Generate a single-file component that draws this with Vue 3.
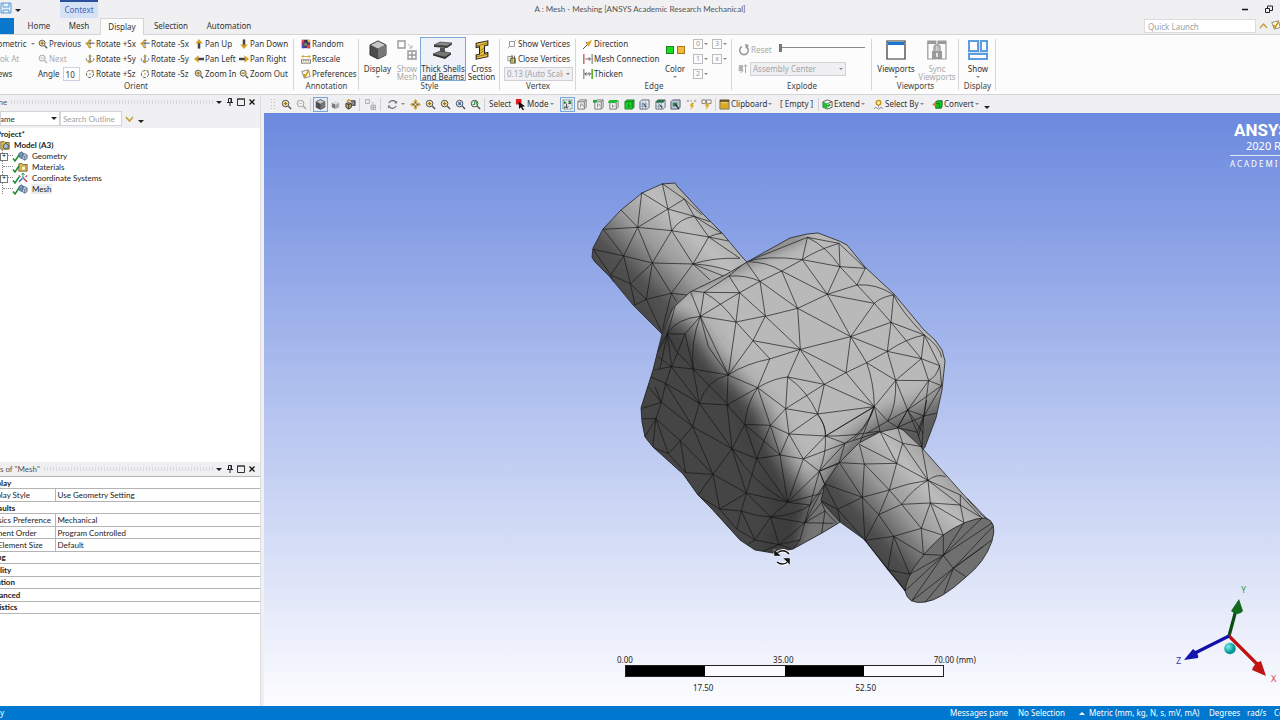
<script setup>
const orient = [
  [['zin', 'Previous'], ['rx', 'Rotate +Sx'], ['rx', 'Rotate -Sx'], ['up', 'Pan Up'], ['down', 'Pan Down']],
  [['zoff', 'Next', true], ['ry', 'Rotate +Sy'], ['ry', 'Rotate -Sy'], ['left', 'Pan Left'], ['right', 'Pan Right']],
  [null, ['rz', 'Rotate +Sz'], ['rz', 'Rotate -Sz'], ['zin', 'Zoom In'], ['zout', 'Zoom Out']],
]
const views = ['Isometric', 'Look At', 'Views']
const annotation = [['random', 'Random'], ['rescale', 'Rescale'], ['prefs', 'Preferences']]
const edge = [['direction', 'Direction'], ['meshcon', 'Mesh Connection'], ['thicken', 'Thicken']]
const edgeKinds = ['0', '3', '1', 'x', '2']
const zoomTools = ['pan', 'zin', 'zin', 'zblue', 'zgreen']
const filters = ['fcube', 'fvert', 'fedge', 'fbody', 'fnode', 'fnodeface', 'felem', 'fhit', 'fcoord']
const tree = [
  { icon: 'model', name: 'Model (A3)', root: true },
  { icon: 'geom', name: 'Geometry', plus: true },
  { icon: 'mat', name: 'Materials' },
  { icon: 'csys', name: 'Coordinate Systems', plus: true },
  { icon: 'geom', name: 'Mesh', on: true },
]
const details = [
  ['Display'], ['Display Style', 'Use Geometry Setting'], ['Defaults'],
  ['Physics Preference', 'Mechanical'], ['Element Order', 'Program Controlled'],
  ['Element Size', 'Default', true], ['Sizing'], ['Quality'], ['Inflation'], ['Advanced'], ['Statistics'],
]

// Mesh edges, one string per surface patch.
const shaftBack = `M247 41 264 117 275 182M247 41 313 87M185 68 264 117M185 68 173 172M264 117 313 87 343 139M264 117 343 139 390 155
M173 172 264 117M123 120 173 172M70 178 173 172 275 182M275 182Q300 145 343 139M275 182 386 201M313 87 366 135M343 139 386 201 480 265M386 201 445 213
M343 139 425 190M386 201Q410 190 425 190M173 172 131 258M173 172 217 279M275 182 217 279M275 182 339 282M386 201 339 282
M70 178 131 258M40 238 131 258 217 279 339 282M339 282Q400 262 480 265M339 282Q400 285 450 303M339 282 430 318M131 258 92 315M131 258 151 341
M40 238 92 315 151 341 217 279M151 341 199 388M217 279 199 388M217 279 274 370M339 282 274 370M274 370 199 388M151 341 165 405
M199 388 165 405M199 388 247 490M274 370 247 480M274 370 290 395M339 282 390 330M92 315 100 335M274 370 320 375`
const bodyTopLeft = `M332 366 361 439M372 367 361 439M332 362 372 367 479 368M479 368 361 439M372 367Q430 400 468 456M447 318 479 368
M447 318Q500 315 540 334M498 275 540 334M498 275 447 318M372 367 447 318M479 368 540 334M479 368 468 456M479 368 556 438M540 334 556 438M361 439 468 456 556 438M468 456 519 512
M468 456 445 615M361 439 445 615M361 439Q330 520 340 597M361 439 315 492M361 439Q290 445 262 492M262 492 315 492 340 597M315 492 275 591M262 492 275 591
M262 492 240 595M262 492 225 560M556 438 519 512M519 512 445 615M262 492 285 410M275 591 235 560M361 439 385 530 445 615M262 492 290 545 340 597`
const bodyTop = `M20 125 202 52 187 119M202 52 297 70M202 52Q260 80 300 140M297 70Q230 90 187 119M297 70 300 140M297 70 376 145M187 119 125 153
M187 119 300 140M187 119 262 223M20 125Q80 105 187 119M20 125Q80 125 125 153L60 184M125 153 262 223M125 153 173 265M60 184 173 265
M76 289 173 265M76 289 181 388M262 223 173 265M262 223 300 140M262 223 351 195M262 223 403 250M262 223 332 350
M300 140 376 145M300 140 351 195 376 145M351 195Q410 190 461 225M351 195 403 250M461 225Q425 230 403 250L332 350M403 250 453 307M461 225 453 307M461 225Q480 270 553 345
M173 265 332 350M173 265 181 388M332 350 181 388M332 350 453 307M332 350 442 394M332 350 318 458M332 350 380 428M453 307 442 394M453 307 553 345M453 307 544 416
M442 394Q500 355 553 345M442 394 544 416M318 458 380 428 442 394 467 481M553 345 544 416M553 345 599 437M544 416 599 437M544 416 566 482M544 416 467 481M553 345Q600 380 605 412M380 428Q402 490 403 560
M380 428 467 481M181 388 318 458 253 493M318 458 403 560M39 362 181 388M39 362 90 417
M253 493 403 560M232 582 403 560 257 648M403 560 467 481 566 482M403 560 443 603M403 560 420 633
M403 560Q390 610 340 660M467 481Q470 560 443 603M467 481 503 570M566 482 605 497M566 482 552 588M566 482 503 570M605 497 503 570M605 497 552 588M599 437Q590 470 566 482M599 437 605 497
M503 570 443 603 473 622M503 570 552 588 590 580M503 570 473 622M443 603 380 640M552 588 473 622M503 570 550 640M552 588 535 650M257 648Q320 650 420 633`
const bodyFront = `M189 87 124 80M189 87 294 105M189 87 208 190M189 87 300 200M124 80 107 130M124 80 72 90M124 80 208 190M294 105Q230 120 208 190L291 195 294 105M294 105 383 143M294 105Q350 70 419 57
M419 57 383 143Q430 115 473 111M510 28 473 111 583 133M419 57 510 28 583 133M473 111 467 206M473 111Q530 150 563 222L583 133 467 206
M383 143 467 206 563 222M467 206 477 282M467 206 421 256M563 222 477 282M563 222Q590 260 586 288M477 282 586 288M477 282 421 256M477 282 450 345M477 282 520 357
M383 143 291 195M383 143Q350 190 344 253M383 143 421 256M291 195 344 253M291 195 306 326M208 190 107 130M208 190 188 260M208 190 306 326M107 130 94 187 75 140M107 130 60 110M94 187 55 140M107 130 188 260
M344 253 306 326M344 253 421 256M344 253 380 356M344 253 450 345M421 256 380 356M421 256 450 345M380 356 450 345 520 357M450 345 473 487M380 356 306 326M380 356 349 459M380 356 473 487
M520 357 586 288M520 357 568 394M520 357 473 487M306 326 249 403M306 326 349 459M306 326Q370 430 473 487M306 326 188 260M188 260 94 187M188 260 151 302M188 260 249 403M151 302 78 236
M151 302 115 341M151 302 249 403M151 302 167 398M94 187 78 236 115 341M78 236 36 236M94 187 36 205M78 236 45 290M78 236 68 322 115 341 167 398M249 403 167 398M249 403 203 467M249 403 269 507M249 403 349 459
M349 459 334 513M349 459 422 531M349 459 473 487M334 513 269 507M334 513 375 600M334 513 320 567M334 513Q380 530 422 531L473 487M422 531 375 600M422 531Q500 525 540 495M422 531 524 548M422 531 447 614
M473 487 568 394M473 487 540 495M269 507 349 459M269 507 203 467M269 507 320 567 375 600 447 614M447 614 510 600M447 614 524 548M540 495 524 548M540 495 584 433M568 394 584 433M568 394 540 495
M586 288Q590 340 568 394M524 548 510 600 487 628M524 548 584 433M524 548 575 487M473 487 575 460M524 548 585 513 575 487M524 548 610 550M585 513 575 580M585 513 620 550M447 614 487 628M375 600 350 615M447 614 400 633M584 433 627 370M568 394 627 370 645 310M520 357 645 310`
const bodyRight = `M323 30 352 97 366 140M371 48 352 97M371 48 380 0M352 97 293 83M371 48 366 145M323 30 293 83M222 20Q200 90 135 130M222 20 178 133M77 108 135 130M52 43Q75 70 77 108M77 108 222 20M58 213 135 130M135 130 240 95M58 213 118 188M74 252 65 303M58 213 74 252`
const shaftFront = `M240 95 290 190M178 133 193 192M178 133 290 190M308 130 290 190M308 130 384 241M240 95 308 130 366 140M293 83 308 130M366 145 384 241M118 188 193 192 290 190M118 188 187 292
M74 252 187 292M74 252 113 328 187 292M193 192 187 292M193 192 268 270M290 190 268 270M290 190 384 241M384 241Q320 250 268 270M384 241Q340 265 305 313M384 241 391 309M384 241Q410 220 437 230M384 241 481 285M384 241 481 315
M187 292 268 270M187 292 236 344M187 292 195 421M268 270 305 313M268 270 236 344M305 313 391 309M305 313 236 344M305 313 364 385M391 309 364 385M391 309 430 406M391 309 492 368M391 309 481 315
M481 285 481 315 492 368M481 285 545 353M481 315 545 353M236 344 195 421M236 344 281 409M113 328 65 303M113 328 195 421M281 409 195 421M281 409 364 385M281 409 370 463M281 409 329 523
M281 409 263 509M364 385 430 406M364 385 370 463M195 421 263 509 329 523M263 509 316 572M195 421 316 572M113 328 120 365M502 295 560 355
M430 406 430 466 370 463M430 466 492 368M430 466 545 355M430 466 575 370M430 466 335 603M430 466 316 572M430 466 329 523M430 466 460 505M460 505 580 378M460 505 550 440M460 505 497 530M460 505 432 580
M460 505 335 603M460 505 375 607M460 505 575 420`
</script>

<template>
  <div class="app">
    <svg class="defs" aria-hidden="true">
      <symbol id="zin" viewBox="0 0 12 12"><circle cx="5" cy="5" r="3.6" fill="#f5efd6" stroke="#444"/><path d="M8 8l3 3" stroke="#555" stroke-width="1.6"/><path d="M3 5h4M5 3v4" stroke="#a87800" stroke-width="1.5"/></symbol>
      <symbol id="zout" viewBox="0 0 12 12"><circle cx="5" cy="5" r="3.6" fill="#f5efd6" stroke="#444"/><path d="M8 8l3 3" stroke="#555" stroke-width="1.6"/><path d="M3 5h4" stroke="#a87800" stroke-width="1.5"/></symbol>
      <symbol id="zoff" viewBox="0 0 12 12"><circle cx="5" cy="5" r="3.6" fill="#f4f4f4" stroke="#999"/><path d="M8 8l3 3" stroke="#aaa" stroke-width="1.5"/><path d="M3 5h4" stroke="#bbb"/></symbol>
      <symbol id="zblue" viewBox="0 0 12 12"><circle cx="5" cy="5" r="3.6" fill="#dde8f5" stroke="#444"/><path d="M8 8l3 3" stroke="#555" stroke-width="1.6"/><rect x="3.4" y="3.4" width="3.2" height="3.2" fill="#4a78b8"/></symbol>
      <symbol id="zgreen" viewBox="0 0 12 12"><circle cx="5" cy="5" r="3.6" fill="#dff0df" stroke="#444"/><path d="M8 8l3 3" stroke="#555" stroke-width="1.6"/><path d="M3 6h2V3h2v3" stroke="#2e8b3a" fill="none"/></symbol>
      <symbol id="rx" viewBox="0 0 12 12"><path d="M3 5h8.500" stroke="#555" stroke-width="1.200"/><path d="M8 2C5 0 3.500 3 3.500 6s1.500 5.500 4 4" fill="none" stroke="#c89a20" stroke-width="1.300"/><path d="M6 1v9" stroke="#444" stroke-width=".8"/><path d="M0 5.500l4-2.500v5z" fill="#c89a20"/></symbol>
      <symbol id="ry" viewBox="0 0 12 12"><path d="M6 1v10" stroke="#444" stroke-width="1.200"/><path d="M2 5C0 8 3 9 6 9s6-1 4-4" fill="none" stroke="#666"/><path d="M4 7l4 2-4 2z" fill="#c89a20"/><path d="M4 3l2-2 2 2" fill="none" stroke="#c89a20"/></symbol>
      <symbol id="rz" viewBox="0 0 12 12"><circle cx="6" cy="6" r="4.300" fill="none" stroke="#555" stroke-width="1.100" stroke-dasharray="4 1.400"/><circle cx="6" cy="6" r="1" fill="#c89a20"/><path d="M8 1l3 1-2 2z" fill="#c89a20"/></symbol>
      <symbol id="rot" viewBox="0 0 12 12"><path d="M2 4.500A4.500 4.500 0 0 1 10 4M10 7.500A4.500 4.500 0 0 1 2 8" fill="none" stroke="#666" stroke-width="1.200"/><path d="M11 1.500v3.500H8zM1 10.500V7h3z" fill="#777"/></symbol>
      <symbol id="up" viewBox="0 0 12 12"><path d="M6 0l4.500 5.500h-9z" fill="#d8a01c"/><path d="M4.500 5h3v6.500h-3z" fill="#444"/></symbol>
      <symbol id="down" viewBox="0 0 12 12"><path d="M6 12l4.500-5.500h-9z" fill="#d8a01c"/><path d="M4.500 .5h3V7h-3z" fill="#444"/></symbol>
      <symbol id="left" viewBox="0 0 12 12"><path d="M0 6l5.500-4.500v9z" fill="#d8a01c"/><path d="M5 4.500h7v3H5z" fill="#444"/></symbol>
      <symbol id="right" viewBox="0 0 12 12"><path d="M12 6L6.500 1.500v9z" fill="#d8a01c"/><path d="M0 4.500h7v3H0z" fill="#444"/></symbol>
      <symbol id="pan" viewBox="0 0 12 12"><path d="M6 0l2.500 3h-5zM6 12l2.500-3h-5zM0 6l3-2.500v5zM12 6L9 3.500v5z" fill="#d8a01c"/><path d="M5 3h2v2H5zM5 7h2v2H5zM3 5h2v2H3zM7 5h2v2H7z" fill="#665530"/></symbol>
      <symbol id="random" viewBox="0 0 12 12"><rect x="1" y="1" width="10" height="10" fill="#503078"/><path d="M1 1h3v3H1zM7 7h4v4H7z" fill="#e04848"/><path d="M4 1h4v3H4z" fill="#403040"/><path d="M8 1h3v3H8z" fill="#e0c040"/><path d="M1 4h3v4H1z" fill="#b02880"/><path d="M4 5h3v3H4z" fill="#50b050"/><path d="M1 8h3v3H1z" fill="#3050c0"/></symbol>
      <symbol id="rescale" viewBox="0 0 12 12"><path d="M1 3h10M3 1L1 3l2 2M9 1l2 2-2 2" fill="none" stroke="#c89a20"/><rect x=".5" y="7" width="11" height="4" fill="#f4f0dc" stroke="#777"/><path d="M3 7v2M5 7v2M7 7v2M9 7v2" stroke="#777" stroke-width=".6"/></symbol>
      <symbol id="prefs" viewBox="0 0 12 12"><path d="M1 3l8-2 2 8-7 2z" fill="#fffbe8" stroke="#777"/><path d="M3 6l2 3 4-7" fill="none" stroke="#c8960c" stroke-width="1.800"/></symbol>
      <symbol id="cube" viewBox="0 0 20 20"><path d="M10 1l8 4v10l-8 4-8-4V5z" fill="#4c4c4c" stroke="#333"/><path d="M10 1l8 4-8 4-8-4z" fill="#c8c8c8" stroke="#444" stroke-width=".7"/><path d="M10 9l8-4v10l-8 4z" fill="#777"/></symbol>
      <symbol id="cubegrey" viewBox="0 0 12 12"><path d="M2 4l4 2v5L2 9z" fill="#777"/><path d="M2 4l4-2 4 2-4 2z" fill="#ddd"/><path d="M6 6l4-2v5l-4 2z" fill="#aaa"/></symbol>
      <symbol id="cubes" viewBox="0 0 12 12"><path d="M1 5l3-1 3 1v4l-3 2-3-2z" fill="#c8a860" stroke="#333"/><path d="M1 5l3 1 3-1M4 6v5" fill="none" stroke="#333"/><path d="M6 2h5v5H8" fill="#888" stroke="#333"/><path d="M2 3l2-2 2 1" fill="none" stroke="#c8960c" stroke-width="1.500"/></symbol>
      <symbol id="showmesh" viewBox="0 0 20 20"><path d="M1 1h7v7H1zM11 11h8v8h-8zM15 11v8M11 15h8" fill="none" stroke="#999" stroke-width="1.400"/><path d="M11 4l4 4m0-3v3h-3" stroke="#bbb" fill="none"/></symbol>
      <symbol id="shell" viewBox="0 0 20 20"><path d="M1 5l6-3 12 1-5 3z" fill="#888" stroke="#333" stroke-width=".6"/><path d="M1 5l13 1 5-3v1.500L14 8 1 7z" fill="#3a3a3a"/><path d="M7 7.500l5 .5v6l-5-1z" fill="#555"/><path d="M0 14l7-3 11 2-6 4z" fill="#777" stroke="#333" stroke-width=".6"/><path d="M0 14l12 3 6-4v1.500L12 19 0 15.500z" fill="#2c2c2c"/></symbol>
      <symbol id="cross" viewBox="0 0 20 24"><path d="M3 4l14-3v5l-4 1v9l4-1v5L3 23v-5l4-1V8L3 9z" fill="#ecc244" stroke="#222" stroke-width="1.300"/><path d="M4 7l12-3M8 13l4-3M8 16l4-3M4 20l12-3" stroke="#6b5200" stroke-width=".8"/></symbol>
      <symbol id="vshow" viewBox="0 0 12 12"><path d="M3 3h6v6H3zM9 3l2-2M3 9l-2 2" fill="#f8f8f8" stroke="#888"/></symbol>
      <symbol id="vclose" viewBox="0 0 12 12"><path d="M1 3h6v5H1z" fill="none" stroke="#888"/><path d="M4 5h6v6H4z" fill="#e8e040" stroke="#554"/><path d="M6 1v9M9 2v9" stroke="#555"/></symbol>
      <symbol id="direction" viewBox="0 0 12 12"><path d="M0 12L6 6" stroke="#555" stroke-width="1.200"/><path d="M11 1L3 5l4 4z" fill="#e0a020"/><path d="M3 3l2 2" stroke="#666"/></symbol>
      <symbol id="meshcon" viewBox="0 0 12 12"><path d="M1 0v12" stroke="#c84848" stroke-width="1.500"/><path d="M11 0v12" stroke="#888" stroke-width="1.500"/><path d="M3 6h6M7 4l2 2-2 2" stroke="#444" fill="none"/></symbol>
      <symbol id="thicken" viewBox="0 0 12 12"><path d="M1 0v12" stroke="#555"/><path d="M11 0v12" stroke="#58b828" stroke-width="2"/><path d="M2 6h7M4 4L2 6l2 2M7 4l2 2-2 2" stroke="#444" fill="none"/></symbol>
      <symbol id="reset" viewBox="0 0 12 12"><path d="M4 2.500A4.300 4.300 0 1 0 8 2.500" fill="none" stroke="#999" stroke-width="1.600"/><path d="M7 0l4 1-3 4z" fill="#999"/></symbol>
      <symbol id="spring" viewBox="0 0 12 12"><path d="M1 2h5L1 4h5L1 6h5L1 8h5L3 11M9 1v10M7 3l2-2 2 2" fill="none" stroke="#999"/></symbol>
      <symbol id="window" viewBox="0 0 20 20"><path d="M1 1h18v18H1z" fill="#fff" stroke="#333" stroke-width="1.200"/><path d="M2 2h16v3H2z" fill="#1878d0"/></symbol>
      <symbol id="sync" viewBox="0 0 20 20"><path d="M.8 1h8v18h-8zM11 1h8v18h-8z" fill="#fafafa" stroke="#999" stroke-width="1.200"/><path d="M1 1h8v3H1zM11 1h8v3h-8z" fill="#999"/><path d="M7 11V8a3 3 0 0 1 6 0v3" fill="none" stroke="#aaa" stroke-width="1.800"/><path d="M5 11h10v8H5z" fill="#999"/><path d="M10 13v4" stroke="#fff" stroke-width="1.500"/></symbol>
      <symbol id="showdisp" viewBox="0 0 20 20"><path d="M0 0h20v20H0z" fill="#5d9ce0"/><path d="M2 2h7v8H2zM14 2h4v8h-4zM2 15h16v3H2z" fill="#fdfdfd"/><path d="M0 12.500h20M11.500 0v12" stroke="#cfe0f5"/></symbol>
      <symbol id="fcube" viewBox="0 0 12 12"><path d="M1 3h7v8H1zM1 3l2-2h7L8 3M10 1v8l-2 2" fill="#f2f2f2" stroke="#666" stroke-width=".9"/><path d="M4 5v4M5 5l2 3" stroke="#666" stroke-width=".8"/></symbol>
      <symbol id="fvert" viewBox="0 0 12 12"><path d="M2 3h7v8H2zM2 3l2-2h7L9 3M11 1v8l-2 2" fill="#f2f2f2" stroke="#666" stroke-width=".9"/><path d="M0 1h4v3H0z" fill="#18b030"/><path d="M5 5v4M6 5l2 3" stroke="#666" stroke-width=".8"/></symbol>
      <symbol id="fedge" viewBox="0 0 12 12"><path d="M2 4h7v7H2zM11 2v7l-2 2" fill="#f2f2f2" stroke="#666" stroke-width=".9"/><path d="M0 3l2-2h9.500L9 4H0z" fill="#18c030"/><path d="M5 6v3l2-2" stroke="#666" fill="none" stroke-width=".8"/></symbol>
      <symbol id="fbody" viewBox="0 0 12 12"><path d="M1 3l2-2h8v8l-2 2H1z" fill="#10d820" stroke="#176020" stroke-width=".8"/><path d="M1 3h8v8M9 3l2-2M5 5v4l2-2" fill="none" stroke="#176020" stroke-width=".8"/></symbol>
      <symbol id="fnode" viewBox="0 0 12 12"><path d="M1 3l2-2h8v8l-2 2H1z" fill="#dde8ee" stroke="#667"/><path d="M4 3v8M7 3v8M1 5.500h8M1 8h8" stroke="#7890a8" stroke-width=".8"/><path d="M5 5l3 4" stroke="#222"/></symbol>
      <symbol id="fnodeface" viewBox="0 0 12 12"><path d="M1 3l2-2h8v8l-2 2H1z" fill="#dde8ee" stroke="#667"/><path d="M1 3l2-2h8L9 4H1z" fill="#2c7048"/><path d="M4 4v7M7 4v7M1 8h8" stroke="#7890a8" stroke-width=".8"/><path d="M5 6l3 4" stroke="#222"/></symbol>
      <symbol id="felem" viewBox="0 0 12 12"><path d="M1 3l2-2h8v8l-2 2H1z" fill="#b4c8d4" stroke="#557"/><path d="M3 4h5v4H3z" fill="#387858"/><path d="M6 6l4 5" stroke="#222" stroke-width="1.200"/></symbol>
      <symbol id="fhit" viewBox="0 0 12 12"><path d="M1 1l2 2M3 1L1 3M5 1l1 2M9 1l2 2M11 1L9 3" stroke="#888" stroke-width=".8"/><path d="M6 4l3 0-2 3h2l-4 5 1-4H4z" fill="#dca820"/></symbol>
      <symbol id="fcoord" viewBox="0 0 12 12"><path d="M1 1h4v4H1zM6 1h5v4H6z" fill="#eee" stroke="#666" stroke-width=".8"/><path d="M6 5l3-1-1 3h1l-4 5 1-4H4z" fill="#dca820"/></symbol>
      <symbol id="fsel" viewBox="0 0 12 12"><path d="M1 1h10v10H1z" fill="none" stroke="#777" stroke-dasharray="2 1"/><path d="M2 2l3 2-3 2zM7 2h3v2H7z" fill="#2a8040"/><path d="M5 5v5l2-2M7 5h3" stroke="#333" fill="none"/><path d="M2 8h2v2H2z" fill="#2a8040"/></symbol>
      <symbol id="mode" viewBox="0 0 12 12"><path d="M1 0h6v6H1z" fill="#e02020"/><path d="M4 3l7 5-3 .5L10 12l-1.500.5L6.500 9 4.500 11z" fill="#111"/></symbol>
      <symbol id="clip" viewBox="0 0 12 12"><path d="M1 1h10v10H1z" fill="#dca828" stroke="#776"/><path d="M1 1h10v2H1z" fill="#5a5030"/><path d="M3 4h6" stroke="#f4dc90"/></symbol>
      <symbol id="extend" viewBox="0 0 12 12"><path d="M6 1l5 2v6l-5 2-5-2V3z" fill="#f4f4f4" stroke="#555"/><path d="M1 3l5 2v6L1 9z" fill="#18c030"/><path d="M6 5l5-2" stroke="#555"/><path d="M6 8l3-2" stroke="#18a028" stroke-width="2"/></symbol>
      <symbol id="selby" viewBox="0 0 12 12"><circle cx="6" cy="4" r="2.600" fill="#f8e8b0" stroke="#c8960c" stroke-width="1.400"/><path d="M6 7v2M1 11l2-2 3 2 3-2 2 2" fill="none" stroke="#888"/></symbol>
      <symbol id="convert" viewBox="0 0 12 12"><path d="M4 3l2-1h5v6l-1 2H4z" fill="#10d020" stroke="#175020"/><path d="M0 6l4-3v6z" fill="#d88840"/><path d="M5 5h3v4" fill="none" stroke="#175020"/></symbol>
      <symbol id="model" viewBox="0 0 12 12"><path d="M1 2h4l1 1h5v8H1z" fill="#e8c050" stroke="#6a5520"/><path d="M4 6l3-2 3 2v3l-3 2-3-2z" fill="#aabccc" stroke="#345"/></symbol>
      <symbol id="geom" viewBox="0 0 12 12"><path d="M1 3l3-2 3 2v4L4 9 1 7z" fill="#7898c8" stroke="#3a4a68" stroke-width=".8"/><path d="M5 5l3-2 3 2v4l-3 2-3-2z" fill="#b8cce8" stroke="#3a4a68" stroke-width=".8"/><path d="M5 5l3 2 3-2M8 7v4" fill="none" stroke="#3a4a68" stroke-width=".7"/></symbol>
      <symbol id="mat" viewBox="0 0 12 12"><path d="M1 2h4l1 1h5v8H1z" fill="#e8c050" stroke="#6a5520"/><path d="M4 5h5v5H4z" fill="#fff4c0" stroke="#997"/></symbol>
      <symbol id="csys" viewBox="0 0 12 12"><path d="M6 6V0M4 2l2-2 2 2" stroke="#28a048" fill="none" stroke-width="1.200"/><path d="M6 6l5 4.500" stroke="#c83030" stroke-width="1.500"/><path d="M6 6l-5 4.500" stroke="#2868c0" stroke-width="1.500"/><path d="M1 3l2 2M11 3L9 5" stroke="#c83030" stroke-width="1.300"/><circle cx="6" cy="6" r="1.600" fill="#40b0d8"/></symbol>
      <symbol id="check" viewBox="0 0 8 8"><path d="M1 4.500L3 7l4-6" fill="none" stroke="#1a8a30" stroke-width="1.500"/></symbol>
      <symbol id="pin" viewBox="0 0 8 8"><path d="M2.500 0.500h3v4h-3zM1 4.500h6M4 4.500V8" fill="none" stroke="#222"/><path d="M5 .5v4" stroke="#222"/></symbol>
      <symbol id="max" viewBox="0 0 8 8"><path d="M.5 1h7v6.500h-7z" fill="none" stroke="#333"/><path d="M0 1h8" stroke="#333"/></symbol>
      <symbol id="x" viewBox="0 0 8 8"><path d="M1.500 1.500l5 5m0-5l-5 5" stroke="#111" stroke-width="1.300"/></symbol>
      <symbol id="save" viewBox="0 0 12 12"><path d="M1 1h10v10H1z" fill="#e4effa" stroke="#5b9bd5"/><path d="M3 1v4h6V1M3 11V8h6v3" fill="none" stroke="#5b9bd5"/></symbol>
    </svg>

    <header class="title">
      <button class="save" aria-label="Save"><svg class="i12"><use href="#save"/></svg></button>
      <button class="qat" aria-label="Customize"><i class="tri"></i></button>
      <span class="context">Context</span>
      <h1>A : Mesh - Meshing [ANSYS Academic Research Mechanical]</h1>
      <button class="win" aria-label="Minimize"><svg width="8" height="8"><path d="M1 4.500h6" stroke="#111" stroke-width="1.500"/></svg></button>
      <button class="win last" aria-label="Restore"><svg width="8" height="8"><path d="M.5 3.500h4v4h-4zM2.500 3V1h5v4.500H5" fill="none" stroke="#222"/></svg></button>
    </header>

    <nav class="tabs">
      <button class="file" aria-label="File"></button>
      <button class="t1">Home</button><button class="t2">Mesh</button><button class="t3">Display</button><button class="t4">Selection</button><button class="t5">Automation</button>
      <input class="quick" placeholder="Quick Launch" aria-label="Quick Launch">
      <button class="fold" aria-label="Collapse ribbon"><svg width="9" height="6"><path d="M1 5l3.500-4L8 5" fill="none" stroke="#c49a3a" stroke-width="1.300"/></svg></button>
      <button class="opt" aria-label="Options"><svg class="i10"><use href="#prefs"/></svg></button>
    </nav>

    <section class="ribbon">
      <div class="group g-orient">
        <div class="orient">
          <template v-for="(row, r) in orient" :key="r">
            <button class="view" :class="{ off: r === 1 }"><span>{{ views[r] }}</span><i v-if="r === 0" class="tri grey"></i></button>
            <template v-for="(c, k) in row" :key="k">
              <button v-if="c" class="cmd" :class="{ off: c[2] }"><svg class="i10"><use :href="'#' + c[0]"/></svg>{{ c[1] }}</button>
              <label v-else class="angle">Angle <input value="10"></label>
            </template>
          </template>
        </div>
        <h2>Orient</h2>
      </div>
      <div class="group g-anno">
        <div class="list"><button v-for="c in annotation" :key="c[1]" class="cmd"><svg class="i10"><use :href="'#' + c[0]"/></svg>{{ c[1] }}</button></div>
        <h2>Annotation</h2>
      </div>
      <div class="group g-style">
        <div class="bigs">
          <button class="big w1"><svg class="i20"><use href="#cube"/></svg><span>Display</span><i class="tri grey"></i></button>
          <button class="big w2 off"><svg class="i20"><use href="#showmesh"/></svg><span>Show<br>Mesh</span></button>
          <button class="big w3 picked"><svg class="i20"><use href="#shell"/></svg><span>Thick Shells<br>and Beams</span></button>
          <button class="big w4"><svg class="i20"><use href="#cross"/></svg><span>Cross<br>Section</span></button>
        </div>
        <h2>Style</h2>
      </div>
      <div class="group g-vertex">
        <div class="list">
          <button class="cmd"><svg class="i10"><use href="#vshow"/></svg>Show Vertices</button>
          <button class="cmd"><svg class="i10"><use href="#vclose"/></svg>Close Vertices</button>
          <div class="pick"><select aria-label="Vertex scale" disabled><option>0.13 (Auto Scale)</option></select><i class="tri grey"></i></div>
        </div>
        <h2>Vertex</h2>
      </div>
      <div class="group g-edge">
        <div class="edge">
          <div class="list"><button v-for="c in edge" :key="c[1]" class="cmd"><svg class="i10"><use :href="'#' + c[0]"/></svg>{{ c[1] }}</button></div>
          <button class="big color"><em class="sw"><i class="green"></i><i class="gold"></i></em><span>Color</span><i class="tri grey"></i></button>
          <div class="kinds"><button v-for="k in edgeKinds" :key="k"><b>{{ k }}</b><i class="tri grey"></i></button></div>
        </div>
        <h2>Edge</h2>
      </div>
      <div class="group g-explode">
        <div class="explode">
          <button class="cmd off"><svg class="i12"><use href="#reset"/></svg>Reset</button>
          <input type="range" min="0" max="100" value="0" aria-label="Explode factor">
          <svg class="i10"><use href="#spring"/></svg>
          <div class="pick"><select aria-label="Explode origin" disabled><option>Assembly Center</option></select><i class="tri grey"></i></div>
        </div>
        <h2>Explode</h2>
      </div>
      <div class="group g-view">
        <div class="bigs">
          <button class="big w5"><svg class="i20"><use href="#window"/></svg><span>Viewports</span><i class="tri grey"></i></button>
          <button class="big w6 off"><svg class="i20"><use href="#sync"/></svg><span>Sync<br>Viewports</span></button>
        </div>
        <h2>Viewports</h2>
      </div>
      <div class="group g-disp">
        <div class="bigs"><button class="big w7"><svg class="i20"><use href="#showdisp"/></svg><span>Show</span><i class="tri grey"></i></button></div>
        <h2>Display</h2>
      </div>
    </section>

    <main>
      <aside>
        <section class="outline">
          <header class="bar b1"><span>Outline</span><i class="dots"></i><i class="tri"></i><svg class="i8"><use href="#pin"/></svg><svg class="i8"><use href="#max"/></svg><svg class="i8"><use href="#x"/></svg></header>
          <div class="search">
            <div class="pick"><select aria-label="Filter"><option>Name</option></select><i class="tri"></i></div>
            <input placeholder="Search Outline" aria-label="Search Outline">
            <svg width="9" height="6"><path d="M1 1l3.500 4L8 1" fill="none" stroke="#c49a3a" stroke-width="1.500"/></svg>
            <i class="tri low"></i>
          </div>
          <ul class="tree">
            <li class="proj">Project*</li>
            <li v-for="n in tree" :key="n.name" :class="{ root: n.root, on: n.on }">
              <template v-if="!n.root"><i class="line" :class="{ plus: n.plus }"></i><svg class="i8"><use href="#check"/></svg></template>
              <svg class="i10"><use :href="'#' + n.icon"/></svg><span>{{ n.name }}</span>
            </li>
          </ul>
        </section>
        <section class="details">
          <header class="bar b2"><span>Details of "Mesh"</span><i class="dots"></i><i class="tri"></i><svg class="i8"><use href="#pin"/></svg><svg class="i8"><use href="#max"/></svg><svg class="i8"><use href="#x"/></svg></header>
          <table>
            <colgroup><col class="c-name"><col></colgroup>
            <tbody>
              <tr v-for="d in details" :key="d[0]">
                <th v-if="!d[1]" colspan="2">{{ d[0] }}</th>
                <template v-else><td class="name" :class="{ sub: d[2] }">{{ d[0] }}</td><td>{{ d[1] }}</td></template>
              </tr>
            </tbody>
          </table>
        </section>
      </aside>

      <section class="work">
        <div class="tools">
          <i class="grip"></i>
          <button class="tb" aria-label="Zoom in"><svg class="i11"><use href="#zin"/></svg></button>
          <button class="tb" aria-label="Zoom out"><svg class="i11"><use href="#zoff"/></svg></button>
          <i class="sep"></i>
          <button class="tb sel" aria-label="Shaded with edges"><svg class="i11"><use href="#cube"/></svg></button>
          <button class="tb" aria-label="Shaded"><svg class="i11"><use href="#cubegrey"/></svg></button>
          <button class="tb" aria-label="Wireframe"><svg class="i11"><use href="#cubes"/></svg></button>
          <i class="sep"></i>
          <button class="tb wide" aria-label="Show mesh"><svg class="i11"><use href="#showmesh"/></svg></button>
          <i class="sep"></i>
          <button class="tb rot" aria-label="Rotate"><svg class="i11"><use href="#rot"/></svg><i class="tri grey"></i></button>
          <button v-for="(z, i) in zoomTools" :key="i" class="tb" :aria-label="'View tool ' + (i + 1)"><svg class="i11"><use :href="'#' + z"/></svg></button>
          <i class="sep"></i>
          <span class="lbl">Select</span>
          <button class="tx mode"><svg class="i11"><use href="#mode"/></svg>Mode<i class="tri grey"></i></button>
          <button class="tb sel" aria-label="Smart select"><svg class="i11"><use href="#fsel"/></svg></button>
          <div class="filters"><button v-for="f in filters" :key="f" class="tb" :aria-label="f"><svg class="i11"><use :href="'#' + f"/></svg></button></div>
          <i class="sep"></i>
          <button class="tx clipb"><svg class="i11"><use href="#clip"/></svg>Clipboard<i class="tri grey"></i></button>
          <span class="empty">[ Empty ]</span>
          <i class="sep"></i>
          <button class="tx ext"><svg class="i11"><use href="#extend"/></svg>Extend<i class="tri grey"></i></button>
          <button class="tx sby"><svg class="i11"><use href="#selby"/></svg>Select By<i class="tri grey"></i></button>
          <button class="tx conv"><svg class="i11"><use href="#convert"/></svg>Convert<i class="tri grey"></i></button>
          <i class="tri low"></i>
        </div>
        <div class="view3d">
          <svg class="scene" viewBox="264 113 1016 593" role="img" aria-label="Meshed solid">
            <defs>
              <linearGradient id="gs1" gradientUnits="userSpaceOnUse" x1="706" y1="216" x2="626" y2="298"><stop offset="0" stop-color="#b0b0b0"/><stop offset=".2" stop-color="#bdbdbd"/><stop offset=".5" stop-color="#9a9a9a"/><stop offset=".8" stop-color="#525252"/><stop offset="1" stop-color="#484848"/></linearGradient>
              <linearGradient id="gs2" gradientUnits="userSpaceOnUse" x1="944" y1="474" x2="860" y2="548"><stop offset="0" stop-color="#a6a6a6"/><stop offset=".2" stop-color="#bcbcbc"/><stop offset=".5" stop-color="#979797"/><stop offset=".82" stop-color="#4d4d4d"/><stop offset="1" stop-color="#444"/></linearGradient>
              <filter id="soft" x="-30%" y="-30%" width="160%" height="160%"><feGaussianBlur stdDeviation="11"/></filter>
              <filter id="soft2" x="-50%" y="-50%" width="200%" height="200%"><feGaussianBlur stdDeviation="6"/></filter>
              <clipPath id="body"><path id="bodyshape" d="M662 334L673 308 690 292 727 274 747 262 790 238 807 234 818 233 839 241 847 245 865 267 894 294 924 330 935 340 942 350 945 361 942 390 936 418 925 447 900 480 837 524 822 533 793 549 773 553 755 550 740 540 711 508 698 495 683 474 653 447 645 437 642 422 641 408 653 370z"/></clipPath>
              <radialGradient id="ball" cx=".35" cy=".35"><stop offset="0" stop-color="#7df0f0"/><stop offset="1" stop-color="#089898"/></radialGradient>
            </defs>
            <path d="M592 257L593 248 603 229 621 210 642 193 662 184 675 183 677 186 703 214 722 233 743 258 755 270 690 340 662 334 633 305 610 277 594 261z" fill="url(#gs1)" stroke="#222" stroke-width=".8"/>
            <g class="mesh" transform="translate(580 170) scale(.33333)"><path :d="shaftBack"/></g>
            <g clip-path="url(#body)">
              <path d="M620 220h340v350H620z" fill="#b9b9b9"/>
              <path d="M655 310L690 322 716 360 762 408 782 456 800 482 850 540 780 580 600 520 610 300z" fill="#3c3c3c" filter="url(#soft)"/>
              <path d="M641 345L680 345 738 412 762 470 770 520 750 570 620 470z" fill="#444" filter="url(#soft2)"/>
              <path d="M958 370L934 402 880 418 850 440 820 480 830 560 960 520z" fill="#5a5a5a" filter="url(#soft)"/>
              <path d="M800 530L812 500 850 480 860 540 800 560z" fill="#747474" filter="url(#soft2)"/>
              <path d="M640 330L672 295 745 262 805 234" fill="none" stroke="#666" stroke-width="7" filter="url(#soft2)"/>
              <g class="mesh" transform="translate(580 170) scale(.33333)"><path :d="bodyTopLeft"/></g>
              <g class="mesh" transform="translate(740 220) scale(.33333)"><path :d="bodyTop"/></g>
              <g class="mesh" transform="translate(630 340) scale(.33333)"><path :d="bodyFront"/></g>
              <g class="mesh" transform="translate(800 400) scale(.33333)"><path :d="bodyRight"/></g>
            </g>
            <use href="#bodyshape" fill="none" stroke="#222" stroke-width=".8"/>
            <path d="M821 501L825 483 839 463 859 443 880 432 898 428 903 430 922 448 946 475 962 493 982 515 990 521 990 535 975 560 915 600 905 591 865 540 840 522z" fill="url(#gs2)" stroke="#222" stroke-width=".8"/>
            <path d="M905 591Q907 568 943 535Q968 518 985 518Q998 521 992 541Q985 562 966 577Q941 600 925 602Q908 605 905 591z" fill="#6f6f6f" stroke="#1c1c1c" stroke-width=".8"/>
            <g class="mesh" transform="translate(800 400) scale(.33333)"><path :d="shaftFront"/></g>
            <path d="M777 553q7-5 12 1M788 562q-6 4-11 0" stroke="#fff" stroke-width="3.500" fill="none"/>
            <path d="M777 553q7-5 12 1M788 562q-6 4-11 0" fill="none" stroke="#111" stroke-width="1.500"/><path d="M774 549v7h7zM790 565v-7h-7z" fill="#111" stroke="#fff" stroke-width=".4"/>
            <g stroke-width="3.200"><path d="M1229 636l7-26" stroke="#0c4a14"/><path d="M1229 636l28 28" stroke="#c01010"/><path d="M1229 636l-36 18" stroke="#1010a8"/></g>
            <path d="M1239 599l4 12q-5 6-12 0z" fill="#126a1c"/><path d="M1266 676l-14-6q2-7 9-9z" fill="#c01414"/><path d="M1184 660l9-11q6 4 5 9z" fill="#1414b0"/>
            <circle cx="1230" cy="648.500" r="5.800" fill="url(#ball)"/>
            <g class="axes"><text x="1241" y="593" fill="#2aa04a">Y</text><text x="1176" y="664" fill="#3a3ab8">Z</text><text x="1271" y="682" fill="#d04050">X</text></g>
          </svg>
          <div class="logo"><strong>ANSYS</strong><span>2020 R1</span><em>ACADEMIC</em></div>
          <div class="scale">
            <div class="nums"><span>0.00</span><span>35.00</span><span>70.00 (mm)</span></div>
            <div class="track"><i></i><i></i><i></i><i></i></div>
            <div class="nums lower"><span>17.50</span><span>52.50</span></div>
          </div>
        </div>
      </section>
    </main>

    <footer><span class="ready">Ready</span><span class="s1">Messages pane</span><span class="s2">No Selection</span><i class="tri upw"></i><span class="s3">Metric (mm, kg, N, s, mV, mA)</span><span class="s4">Degrees</span><span class="s5">rad/s</span><span class="s6">Celsius</span></footer>
  </div>
</template>

<style>
html, body { margin: 0; overflow: hidden; }
</style>

<style scoped>
.app { height: 100vh; display: flex; flex-direction: column; overflow: hidden; background: #f0f0f2; color: #333; font: 8px/10px "Noto Sans", "Open Sans", sans-serif; }
.app * { box-sizing: border-box; }
.defs { position: absolute; width: 0; height: 0; }
button, input, select { font: inherit; color: inherit; background: none; border: 0; padding: 0; margin: 0; border-radius: 0; min-width: 0; white-space: nowrap; }
svg, i { flex: none; }
.i8 { width: 8px; height: 8px; }
.i10 { width: 10px; height: 10px; }
.i11 { width: 11px; height: 11px; }
.i12 { width: 12px; height: 12px; }
.i20 { width: 20px; height: 20px; }
.tri { display: inline-block; border: 3px solid transparent; border-top-color: #222; border-bottom: 0; }
.tri.grey { border-width: 2px; border-bottom: 0; border-top-color: #888; }
.off { color: #aaa; }

.title { height: 18px; display: flex; align-items: center; }
.save { width: 12px; height: 14px; }
.qat { width: 12px; }
.context { width: 38px; height: 18px; margin-left: 36px; border-top: 2px solid #2c519c; background: #d5e1f5; color: #4468b8; text-align: center; line-height: 16px; }
.title h1 { flex: 1; margin: 0; padding-right: 59px; font: inherit; font-family: Lato, sans-serif; line-height: 20px; text-align: center; color: #555; }
.win { width: 8px; height: 8px; margin-right: 16px; }
.win.last { margin-right: 7px; }

.tabs { height: 17px; display: flex; align-items: stretch; border-bottom: 1px solid #d4d4d6; }
.tabs button { text-align: center; }
.file { width: 14px; background: #0a76cc; }
.t1 { width: 50px; } .t2 { width: 30px; } .tabs .t3 { width: 44px; margin-left: 6px; background: #fcfcfc; border: 1px solid #d4d4d6; border-bottom: 0; margin-bottom: -1px; } .t4 { width: 54px; } .t5 { width: 62px; }
.quick { width: 112px; height: 14px; margin: 1px 0 0 auto; padding: 0 3px; background: #fff; border: 1px solid #dcdcde; }
.fold { width: 15px; }
.opt { width: 10px; margin-right: -1px; }
input::placeholder { color: #a0a0a0; opacity: 1; }

.ribbon { height: 60px; display: flex; background: #fcfcfc; border-bottom: 1px solid #d4d4d6; }
.group { padding-top: 2px; position: relative; display: flex; flex-direction: column; }
.group::after { content: ""; position: absolute; right: 0; top: 4px; bottom: 4px; width: 1px; background: #d6d6d8; }
.group h2 { margin: auto 0 4px; font: inherit; line-height: 9px; text-align: center; color: #444; }
.g-orient { width: 294px; } .g-anno { width: 65px; } .g-style { width: 141px; } .g-vertex { width: 76px; } .g-edge { width: 156px; } .g-explode { width: 140px; } .g-view { width: 87px; } .g-disp { width: 37px; }
.g-orient h2 { padding-right: 22px; }
.orient { display: grid; grid-template-columns: 38px 47px 55px 54px 45px 52px; grid-auto-rows: 14px; row-gap: 1px; }
.cmd { display: flex; align-items: center; gap: 1px; height: 14px; }
.view { display: flex; align-items: center; justify-content: space-between; overflow: hidden; }
.view span { margin-left: -9px; }
.view .tri { margin-right: 3px; }
.angle { display: flex; align-items: center; gap: 3px; white-space: nowrap; }
.angle input { width: 17px; height: 14px; border: 1px solid #ccd0dc; padding: 0 2px; background: #fff; }
.list { display: flex; flex-direction: column; align-items: flex-start; padding-left: 7px; gap: 1px; }
.bigs { display: flex; align-items: flex-start; padding-left: 2px; }
.big { height: 44px; display: flex; flex-direction: column; align-items: center; line-height: 8px; border: 1px solid transparent; padding-top: 2px; }
.big span { margin-top: 5px; text-align: center; }
.big .tri { margin-top: 3px; }
.picked { background: #eef1f8; border-color: #7aa7d8; }
.w1 { width: 33px; } .w2 { width: 26px; } .w3 { width: 46px; } .w4 { width: 31px; } .w5 { width: 44px; } .w6 { width: 38px; } .w7 { width: 34px; }
.pick { position: relative; display: flex; }
.pick select { appearance: none; width: 100%; opacity: 1; }
.pick .tri { position: absolute; right: 3px; top: 6px; }
.g-vertex .pick { width: 69px; margin-left: -3px; }
.g-vertex select, .explode select { background: #f0f0f2; border: 1px solid #d0d0d6; color: #a4a4a8; padding: 0 9px 0 2px; height: 14px; }
.edge { display: flex; }
.edge .list { width: 84px; }
.color { width: 30px; padding-top: 8px; }
.sw { display: flex; gap: 3px; height: 8px; }
.sw i { width: 8px; height: 8px; border: 1px solid #20801c; background: #12e01c; }
.sw .gold { background: #f4b83c; border-color: #a87818; }
.color span { margin-top: 11px; }
.kinds { display: grid; grid-template-columns: 19px 19px; grid-auto-rows: 14px; row-gap: 1px; align-items: center; margin-left: 3px; }
.kinds button { display: flex; align-items: center; gap: 1px; }
.kinds b { width: 10px; height: 10px; border: 1px solid #bbb; font: 7px/8px "Noto Sans", sans-serif; color: #999; text-align: center; }
.explode { display: grid; grid-template-columns: 12px 30px 86px; padding: 6px 0 0 6px; row-gap: 5px; align-items: center; }
.explode .cmd { grid-column: 1 / 3; }
.explode input { appearance: none; width: 86px; height: 10px; margin: -4px 0 0 -1px; background: linear-gradient(#888, #888) 0 4px / 100% 1px no-repeat; }
.explode input::-webkit-slider-thumb { appearance: none; width: 3px; height: 8px; background: #777; }
.explode .pick { grid-column: 2 / 4; width: 96px; }

main { flex: 1; min-height: 0; display: flex; }
aside { width: 261px; display: flex; flex-direction: column; overflow: hidden; background: #fff; border-right: 1px solid #dcdcde; font-family: Lato, "Noto Sans", sans-serif; }
.outline { flex: 1; min-height: 0; }
.bar { height: 14px; display: flex; align-items: center; background: #f0f0f2; padding-right: 4px; gap: 3px; color: #555; }
.bar .tri { margin-right: 1px; }
.b1 span { margin-left: -19px; }
.b2 span { margin-left: -21px; white-space: nowrap; }
.dots { flex: 1; height: 4px; background-image: radial-gradient(#bbb 30%, transparent 40%); background-size: 3px 2px; }
.search { height: 19px; display: flex; align-items: center; background: #f0f0f2; }
.search .pick { width: 60px; }
.search select { height: 15px; background: #fff; border: 1px solid #d4d4d8; text-indent: -7px; }
.search input { width: 62px; height: 15px; background: #fff; border: 1px solid #d4d4d8; padding: 0 2px; margin-right: 3px; }
.low { margin: 6px 0 0 4px; }
.tree { list-style: none; margin: 0; padding: 0; color: #222; }
.tree li { height: 11px; display: flex; align-items: center; }
.tree .proj { font-weight: 700; margin-left: -4px; }
.tree .root { font-weight: 700; gap: 4px; }
.line { width: 12px; height: 11px; border-left: 1px dotted #888; margin-left: 2px; position: relative; }
.line::before { content: ""; position: absolute; left: 0; right: 1px; top: 5px; border-top: 1px dotted #888; }
.line.plus::after { content: "+"; position: absolute; left: -3px; top: 3px; width: 6px; height: 6px; border: 1px solid #777; background: #fff; font: 7px/4px "Noto Sans", sans-serif; text-align: center; color: #000; }
.tree .i8 { margin: 4px -3px 0 -2px; z-index: 1; }
.tree li:not(.root) .i10 { margin-left: 1px; margin-right: 4px; }
.tree .on span { background: #ececee; padding: 0 1px; margin-left: -1px; }
.details { height: 244px; }
table { width: 100%; height: 138px; border-collapse: collapse; color: #222; border-bottom: 1px solid #b4b4b4; table-layout: fixed; }
.c-name { width: 55px; }
th, td { padding: 0 2px; border-top: 1px solid #b4b4b4; text-align: left; white-space: nowrap; line-height: 10px; }
th { text-indent: -17px; }
.name { border-right: 1px solid #b4b4b4; text-indent: -17px; overflow: hidden; }
.name.sub { text-indent: -4px; }

.work { flex: 1; min-width: 0; display: flex; flex-direction: column; padding-left: 3px; }
.tools { height: 18px; display: flex; align-items: center; padding-left: 6px; }
.grip { width: 5px; height: 12px; margin-right: 4px; background-image: radial-gradient(#bbb 30%, transparent 40%); background-size: 3px 3px; }
.tb { width: 15px; height: 15px; display: flex; align-items: center; justify-content: center; border: 1px solid transparent; }
.tb.sel { border-color: #7aa7d8; background: #e4ecf7; }
.tb.wide { width: 17px; }
.tb.rot { width: 25px; gap: 3px; }
.sep { width: 4px; height: 13px; background: linear-gradient(#d0d0d4, #d0d0d4) 1px 0 / 1px 100% no-repeat; }
.lbl { width: 26px; margin-left: 2px; }
.tx { display: flex; align-items: center; gap: 1px; }
.mode { width: 44px; margin-right: 1px; }
.filters { display: flex; width: 139px; justify-content: space-between; }
.clipb { width: 61px; margin-left: 1px; } .empty { width: 37px; } .ext { width: 51px; margin-left: 1px; } .sby { width: 59px; } .conv { width: 48px; }
.view3d { flex: 1; min-height: 0; position: relative; overflow: hidden; background: linear-gradient(#6b89de, #b4c3ef 50%, #fdfdff); }
.scene { position: absolute; inset: 0; width: 100%; height: 100%; }
.mesh path { fill: none; stroke: #141414; stroke-width: 2px; stroke-linejoin: round; }
.axes { font: 9px "Noto Sans", sans-serif; }
.logo { position: absolute; right: -16px; top: 7px; width: 66px; display: flex; flex-direction: column; color: #fff; }
.logo strong { font: 700 17px/20px Roboto, "Noto Sans", sans-serif; padding-left: 4px; }
.logo span { font-size: 11px; line-height: 12px; padding: 0 0 3px 16px; border-bottom: 1px solid #dfe6fa; }
.logo em { font-style: normal; font-size: 8px; line-height: 16px; letter-spacing: 2px; }
.scale { position: absolute; left: 361px; bottom: 13px; width: 319px; color: #222; }
.nums { display: flex; justify-content: space-between; margin: 0 -32px 0 -8px; white-space: nowrap; }
.track { display: flex; height: 12px; border: 1px solid #222; }
.track i { flex: 1; background: #fbfbff; }
.track i:nth-child(odd) { background: #000; }
.nums.lower { margin: 6px 68px 0; }

footer { height: 14px; display: flex; align-items: center; background: #0078cf; color: #fff; white-space: nowrap; overflow: hidden; }
.ready { margin-left: -19px; margin-right: auto; }
.s1 { width: 68px; } .s2 { width: 61px; } .s3 { width: 120px; } .s4 { width: 38px; } .s5 { width: 27px; } .s6 { width: 6px; }
.upw { border-top: 0; border-bottom: 3px solid #fff; margin-right: 4px; }
</style>
